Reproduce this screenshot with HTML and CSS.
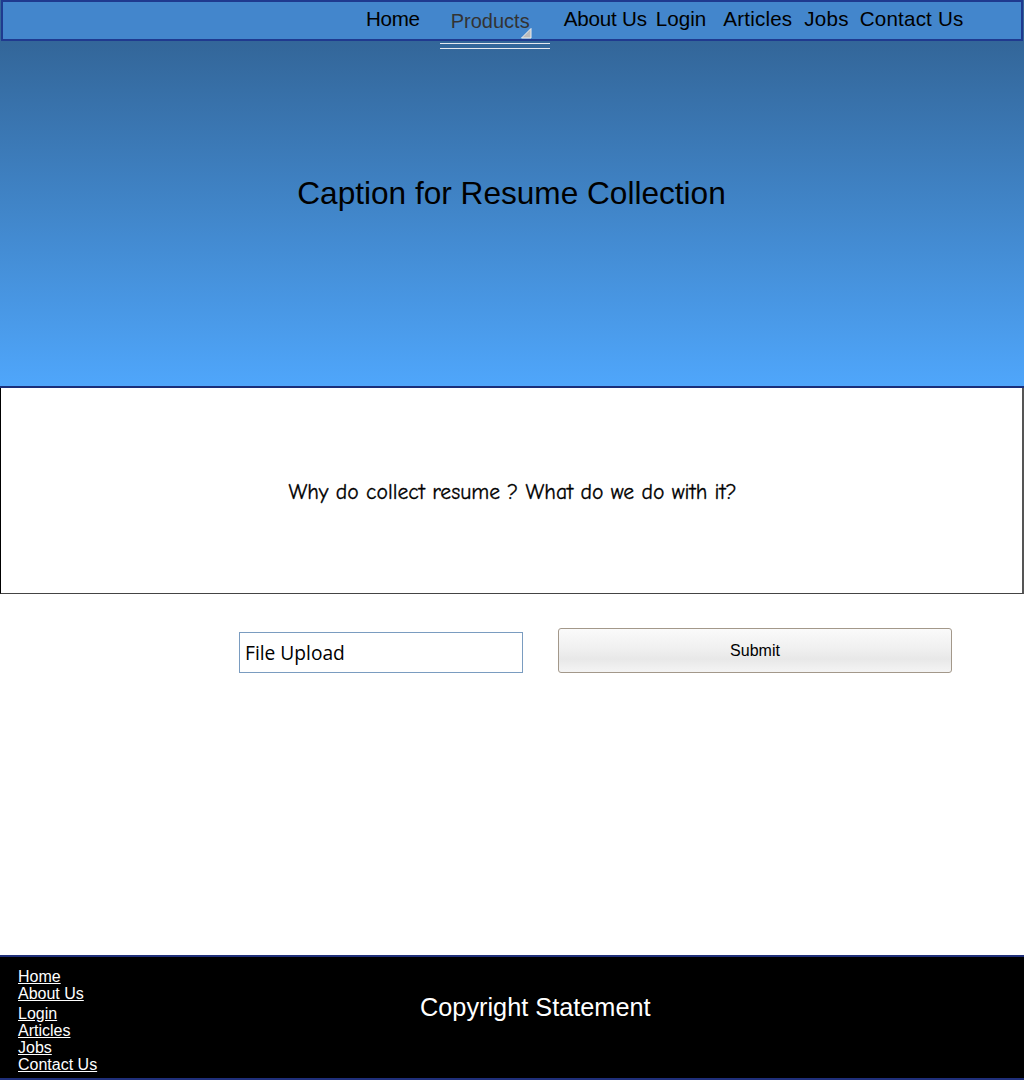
FILE: index.html
```html
<!DOCTYPE html>
<html>
<head>
<meta charset="utf-8">
<link rel="stylesheet" href="styles.css">
</head>
<body>
<header class="hero">
  <nav class="nav">
    <a class="nav-item home">Home</a>
    <a class="nav-item products">Products
      <svg class="tri" width="11" height="11" viewBox="0 0 11 11"><polygon points="10,0.5 10,10 0.5,10" fill="#bbb" stroke="#eee" stroke-width="1"/></svg>
    </a>
    <a class="nav-item about">About Us</a>
    <a class="nav-item login">Login</a>
    <a class="nav-item articles">Articles</a>
    <a class="nav-item jobs">Jobs</a>
    <a class="nav-item contact">Contact Us</a>
  </nav>
  <h1 class="caption">Caption for Resume Collection</h1>
</header>
<section class="why">
  <p>Why do collect resume ? What do we do with it?</p>
</section>
<section class="form">
  <div class="upload">File Upload</div>
  <button class="submit">Submit</button>
</section>
<footer class="footer">
  <div class="links">
    <a>Home</a>
    <a>About Us</a>
    <a class="gap">Login</a>
    <a>Articles</a>
    <a>Jobs</a>
    <a>Contact Us</a>
  </div>
  <div class="copy">Copyright Statement</div>
</footer>
</body>
</html>
```

FILE: styles.css
```css
* { box-sizing: border-box; }
html, body { margin: 0; padding: 0; background: #fff; }
body { width: 1024px; height: 1080px; font-family: "Liberation Sans", Arial, sans-serif; position: relative; overflow: hidden; }

.hero {
  background: linear-gradient(to bottom, #33669a 0px, #336699 41px, #4fa6fb 386px);
  border-bottom: 2px solid #1a2f7a;
  height: 388px;
  display: flex;
  flex-direction: column;
}
.nav {
  margin: 0 1px;
  height: 41px;
  background: #4386cc;
  border: 2px solid #1f3a8f;
  display: flex;
  align-items: flex-start;
  font-size: 20.6px;
  color: #000;
  padding-left: 363px;
}
.nav-item { display: block; line-height: 20px; margin-top: 7px; white-space: nowrap; }
.home { letter-spacing: -0.3px; }
.products {
  position: relative;
  color: #333;
  margin-top: 9px;
  width: 110px;
  padding-left: 11px;
  margin-left: 20px;
  font-size: 20px;
}
.products::after {
  content: "";
  position: absolute;
  left: 0; top: 32px;
  width: 110px; height: 4px;
  border-top: 1px solid #e4e8ee;
  border-bottom: 1px solid #e4e8ee;
}
.tri { position: absolute; left: 81px; top: 17px; }
.about { margin-left: 14px; letter-spacing: -0.2px; }
.login { margin-left: 9px; }
.articles { margin-left: 17px; letter-spacing: 0.2px; }
.jobs { margin-left: 12px; letter-spacing: 0.2px; }
.contact { margin-left: 11px; letter-spacing: 0.2px; }

.caption {
  margin: 0;
  margin-top: 134px;
  text-align: center;
  font-weight: normal;
  font-size: 31.6px;
  color: #000;
  padding-right: 1px;
}

.why {
  height: 206px;
  border-left: 1px solid #000;
  border-right: 2px solid #555;
  border-bottom: 1px solid #444;
  display: flex;
  align-items: center;
  justify-content: center;
}
.why p {
  margin: 0;
  padding-top: 2px;
  padding-left: 2px;
  font-family: "Comic Sans MS", "Comic Neue", "DejaVu Sans", cursive;
  font-size: 21.7px;
  color: #000;
  -webkit-text-stroke: 0.3px #000;
}

.form {
  display: flex;
  align-items: flex-end;
  padding-left: 239px;
  margin-top: 34px;
  height: 45px;
}
.upload {
  width: 284px;
  height: 41px;
  border: 1px solid #7a9cc0;
  font-family: "Open Sans", "Noto Sans", sans-serif;
  font-size: 19.2px;
  line-height: 40px;
  padding-left: 5px;
  color: #000;
}
.submit {
  margin-left: 35px;
  width: 394px;
  height: 45px;
  border: 1px solid #a3988a;
  border-radius: 3px;
  background: linear-gradient(to bottom, #fafafa 0%, #f0f0f0 45%, #e8e8e8 70%, #f4f4f4 100%);
  font-family: "Liberation Sans", Arial, sans-serif;
  font-size: 16px;
  color: #000;
  padding: 0;
}

.footer {
  position: absolute;
  left: 0; right: 0; bottom: 0;
  height: 125px;
  background: #000;
  border-top: 2px solid #1f2f7a;
  border-bottom: 2px solid #1f2f7a;
  display: flex;
  color: #fff;
}
.links {
  display: flex;
  flex-direction: column;
  padding-left: 18px;
  padding-top: 11px;
  font-size: 16px;
  line-height: 17.3px;
  width: 320px;
}
.links a { text-decoration: underline; color: #fff; align-self: flex-start; }
.links a.gap { margin-top: 2px; }
.copy {
  font-size: 25.3px;
  margin-top: 36px;
  margin-left: 100px;
}
```
